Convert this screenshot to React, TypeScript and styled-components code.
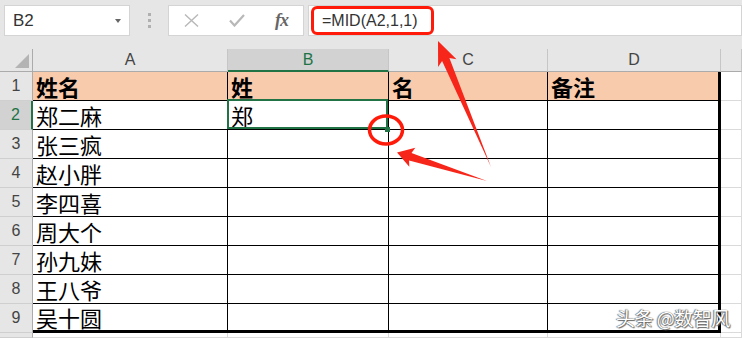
import React from 'react'
import styled, { createGlobalStyle } from 'styled-components'

const CJK = `"Noto Sans CJK SC", "Noto Sans", sans-serif`
const GREEN = '#217346'

const GlobalStyle = createGlobalStyle`
  html, body { margin: 0; padding: 0; background: #fff; }
  body { font-family: "Liberation Sans", Arial, sans-serif; overflow: hidden; }
`

const Page = styled.div`
  position: relative;
  width: 742px;
  height: 338px;
  overflow: hidden;
  background: #fff;
`

const FormulaBar = styled.div`
  height: 49px;
  box-sizing: border-box;
  background: #e6e6e6;
  display: flex;
  align-items: flex-start;
  padding: 5px 0 0 4px;
`

const Field = styled.div<{ $width?: number }>`
  box-sizing: border-box;
  height: 31px;
  background: #fff;
  border: 1px solid #d4d4d4;
  display: flex;
  align-items: center;
  ${(p) => (p.$width ? `width: ${p.$width}px; flex: none;` : 'flex: 1; margin-left: 4px;')}
`

const NameText = styled.span`
  font-size: 17px;
  color: #333;
  padding-left: 8px;
`

const Caret = styled.span`
  margin-left: auto;
  margin-right: 8px;
  width: 0;
  height: 0;
  border-left: 3.5px solid transparent;
  border-right: 3.5px solid transparent;
  border-top: 4px solid #666;
`

const Splitter = styled.div`
  width: 38px;
  height: 31px;
  display: flex;
  flex-direction: column;
  align-items: center;
  justify-content: center;
  gap: 3px;
`

const Dot = styled.span`
  width: 3px;
  height: 3px;
  background: #b0b0b0;
`

const FxButtons = styled.div`
  display: grid;
  grid-template-columns: repeat(3, 45px);
  align-items: center;
  justify-items: center;
  height: 100%;
`

const FxLabel = styled.span`
  font-family: "Liberation Serif", serif;
  font-style: italic;
  font-weight: bold;
  font-size: 18px;
  color: #666;
  letter-spacing: -1px;
`

const Highlight = styled.span`
  box-sizing: border-box;
  width: 123px;
  height: 29px;
  margin-left: 2px;
  border: 3px solid #ff1a0a;
  border-radius: 6px;
  padding-left: 8px;
  display: flex;
  align-items: center;
  font-size: 16px;
  color: #333;
`

const Sheet = styled.div`
  display: grid;
  grid-template-columns: 33px 195px 161px 159px 173px 1fr;
  grid-template-rows: 23px repeat(9, 29px) 1fr;
  height: 289px;
`

const Corner = styled.div`
  position: relative;
  background: #e6e6e6;
  border-right: 1px solid #ababab;
  border-bottom: 1px solid #ababab;
  &::after {
    content: '';
    position: absolute;
    right: 3px;
    bottom: 3px;
    width: 14px;
    height: 14px;
    background: #b4b4b4;
    clip-path: polygon(100% 0, 100% 100%, 0 100%);
  }
`

const ColHeader = styled.div<{ $selected?: boolean }>`
  box-sizing: border-box;
  background: ${(p) => (p.$selected ? '#d2d2d2' : '#e6e6e6')};
  color: ${(p) => (p.$selected ? GREEN : '#444')};
  border-right: 1px solid #c6c6c6;
  border-bottom: ${(p) => (p.$selected ? `2px solid ${GREEN}` : '1px solid #ababab')};
  display: flex;
  align-items: center;
  justify-content: center;
  font-size: 16px;
`

const RowHeader = styled.div<{ $selected?: boolean }>`
  box-sizing: border-box;
  background: ${(p) => (p.$selected ? '#d2d2d2' : '#e6e6e6')};
  color: ${(p) => (p.$selected ? GREEN : '#444')};
  border-right: ${(p) => (p.$selected ? `2px solid ${GREEN}` : '1px solid #ababab')};
  border-bottom: 1px solid #cfcfcf;
  display: flex;
  align-items: center;
  justify-content: center;
  font-size: 16px;
`

const Cell = styled.div<{
  $head?: boolean
  $outside?: boolean
  $thickRight?: boolean
  $thickBottom?: boolean
  $active?: boolean
}>`
  box-sizing: border-box;
  position: relative;
  z-index: ${(p) => (p.$active ? 2 : 0)};
  background: ${(p) => (p.$head ? '#f8cbad' : '#fff')};
  border-right: ${(p) =>
    p.$thickRight ? '3px solid #000' : p.$outside ? '1px solid #dadada' : '1px solid #000'};
  border-bottom: ${(p) =>
    p.$thickBottom ? '3px solid #000' : p.$outside ? '1px solid #dadada' : '1px solid #000'};
  padding-left: 3px;
  display: flex;
  align-items: center;
  font-family: ${CJK};
  font-size: 22px;
  line-height: 26px;
  font-weight: ${(p) => (p.$head ? 700 : 400)};
  color: #000;
  white-space: nowrap;
  ${(p) =>
    p.$active &&
    `
    &::after {
      content: '';
      position: absolute;
      top: -2px;
      left: -1px;
      right: 0;
      bottom: 0;
      border: 2px solid ${GREEN};
    }
    &::before {
      content: '';
      position: absolute;
      right: -2px;
      bottom: -3px;
      width: 5px;
      height: 5px;
      background: ${GREEN};
      z-index: 3;
    }
  `}
`

const Overlay = styled.svg`
  position: absolute;
  left: 0;
  top: 0;
  z-index: 10;
  pointer-events: none;
`

const Watermark = styled.div`
  position: absolute;
  z-index: 11;
  left: 616px;
  top: 304px;
  font-family: ${CJK};
  font-size: 19px;
  color: #fff;
  letter-spacing: -0.5px;
  text-shadow: 0 0 1px #444, 1px 1px 1px #666, -1px 0 1px #888;
`

const header = ['姓名', '姓', '名', '备注']
const names = ['郑二麻', '张三疯', '赵小胖', '李四喜', '周大个', '孙九妹', '王八爷', '吴十圆']
const columns = ['A', 'B', 'C', 'D']

function CancelIcon() {
  return (
    <svg width="15" height="13" viewBox="0 0 15 13">
      <path d="M1 0.5 L14 12.5 M14 0.5 L1 12.5" stroke="#b8b8b8" strokeWidth="1.4" fill="none" />
    </svg>
  )
}

function CheckIcon() {
  return (
    <svg width="16" height="13" viewBox="0 0 16 13">
      <path d="M1 6.5 L5.5 11.5 L15 1" stroke="#b8b8b8" strokeWidth="2.2" fill="none" />
    </svg>
  )
}

export default function App() {
  const rows = [header, ...names.map((n, i) => [n, i === 0 ? '郑' : '', '', ''])]

  return (
    <Page>
      <GlobalStyle />
      <FormulaBar>
        <Field $width={126}>
          <NameText>B2</NameText>
          <Caret />
        </Field>
        <Splitter>
          <Dot />
          <Dot />
          <Dot />
        </Splitter>
        <Field $width={136}>
          <FxButtons>
            <CancelIcon />
            <CheckIcon />
            <FxLabel>fx</FxLabel>
          </FxButtons>
        </Field>
        <Field>
          <Highlight>=MID(A2,1,1)</Highlight>
        </Field>
      </FormulaBar>

      <Sheet>
        <Corner />
        {columns.map((c) => (
          <ColHeader key={c} $selected={c === 'B'}>
            {c}
          </ColHeader>
        ))}
        <ColHeader />

        {rows.map((r, ri) => (
          <React.Fragment key={ri}>
            <RowHeader $selected={ri === 1}>{ri + 1}</RowHeader>
            {r.map((v, ci) => (
              <Cell
                key={ci}
                $head={ri === 0}
                $thickRight={ci === 3}
                $thickBottom={ri === rows.length - 1}
                $active={ri === 1 && ci === 1}
              >
                {v}
              </Cell>
            ))}
            <Cell $outside />
          </React.Fragment>
        ))}

        <RowHeader />
        {columns.map((c) => (
          <Cell key={c} $outside />
        ))}
        <Cell $outside />
      </Sheet>

      <Overlay width="742" height="338" viewBox="0 0 742 338">
        <ellipse cx="386" cy="130" rx="16.5" ry="14" fill="none" stroke="#ff1a0a" strokeWidth="3.5" />
        <polygon
          points="491,167 449.4,57.9 456.5,59.2 438,41 438.1,67 442.1,61"
          fill="#f7261a"
        />
        <polygon
          points="487,181 411.5,152.9 415.3,147.8 397,152.5 409.3,166.8 409.1,160.5"
          fill="#f7261a"
        />
      </Overlay>

      <Watermark>头条 @数智风</Watermark>
    </Page>
  )
}
